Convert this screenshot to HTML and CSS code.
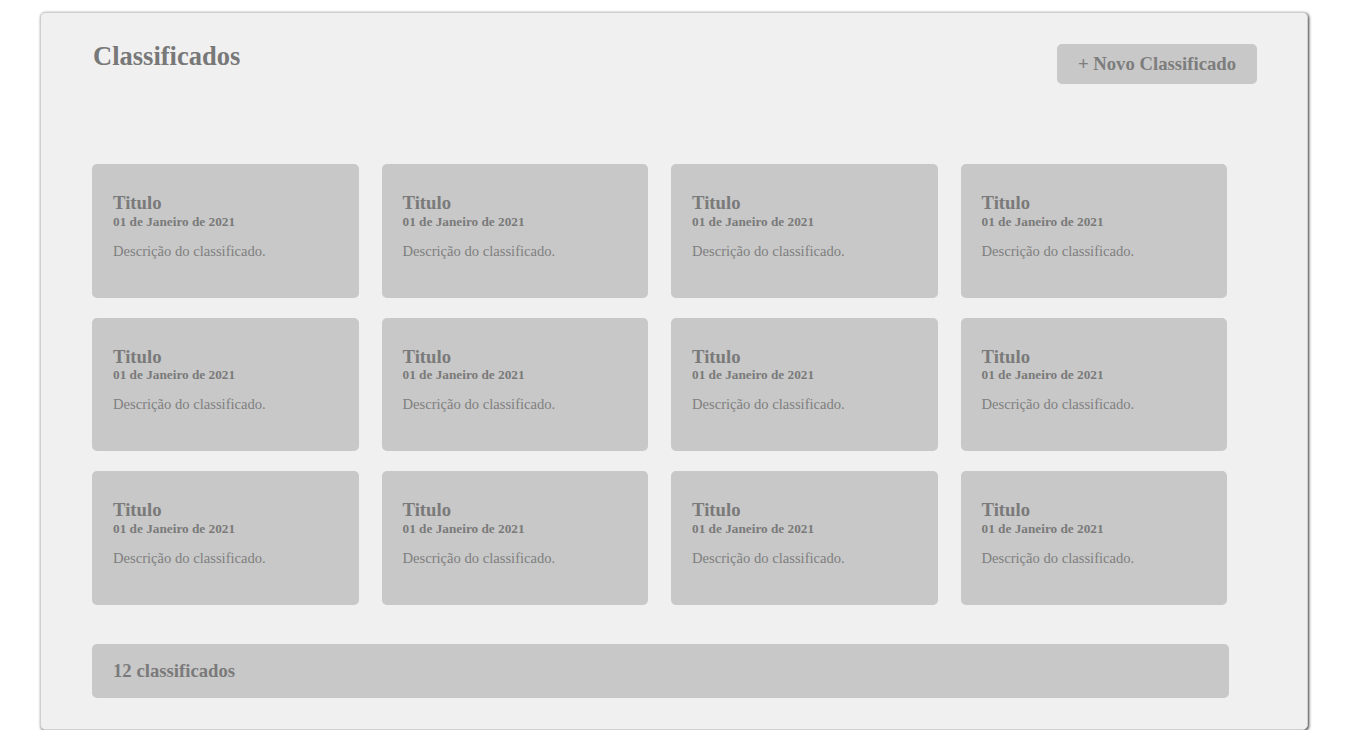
FILE: index.html
```html
<!DOCTYPE html>
<html lang="pt">
<head>
<meta charset="utf-8">
<title>Classificados</title>
<link rel="stylesheet" href="styles.css">
</head>
<body>
<main class="panel">
  <header class="panel-header">
    <h1 class="panel-title">Classificados</h1>
    <button class="btn-new" type="button">+ Novo Classificado</button>
  </header>
  <section class="grid">
    <article class="card"><h3 class="card-title">Titulo</h3><h5 class="card-date">01 de Janeiro de 2021</h5><p class="card-desc">Descrição do classificado.</p></article>
    <article class="card"><h3 class="card-title">Titulo</h3><h5 class="card-date">01 de Janeiro de 2021</h5><p class="card-desc">Descrição do classificado.</p></article>
    <article class="card"><h3 class="card-title">Titulo</h3><h5 class="card-date">01 de Janeiro de 2021</h5><p class="card-desc">Descrição do classificado.</p></article>
    <article class="card"><h3 class="card-title">Titulo</h3><h5 class="card-date">01 de Janeiro de 2021</h5><p class="card-desc">Descrição do classificado.</p></article>
    <article class="card"><h3 class="card-title">Titulo</h3><h5 class="card-date">01 de Janeiro de 2021</h5><p class="card-desc">Descrição do classificado.</p></article>
    <article class="card"><h3 class="card-title">Titulo</h3><h5 class="card-date">01 de Janeiro de 2021</h5><p class="card-desc">Descrição do classificado.</p></article>
    <article class="card"><h3 class="card-title">Titulo</h3><h5 class="card-date">01 de Janeiro de 2021</h5><p class="card-desc">Descrição do classificado.</p></article>
    <article class="card"><h3 class="card-title">Titulo</h3><h5 class="card-date">01 de Janeiro de 2021</h5><p class="card-desc">Descrição do classificado.</p></article>
    <article class="card"><h3 class="card-title">Titulo</h3><h5 class="card-date">01 de Janeiro de 2021</h5><p class="card-desc">Descrição do classificado.</p></article>
    <article class="card"><h3 class="card-title">Titulo</h3><h5 class="card-date">01 de Janeiro de 2021</h5><p class="card-desc">Descrição do classificado.</p></article>
    <article class="card"><h3 class="card-title">Titulo</h3><h5 class="card-date">01 de Janeiro de 2021</h5><p class="card-desc">Descrição do classificado.</p></article>
    <article class="card"><h3 class="card-title">Titulo</h3><h5 class="card-date">01 de Janeiro de 2021</h5><p class="card-desc">Descrição do classificado.</p></article>
  </section>
  <footer class="panel-footer">12 classificados</footer>
</main>
</body>
</html>
```

FILE: styles.css
```css
* { box-sizing: border-box; }

html, body {
  margin: 0;
  padding: 0;
  background: #ffffff;
  font-family: "Liberation Serif", "Times New Roman", serif;
  color: #7d7d7d;
}

.panel {
  width: 1268px;
  height: 718px;
  margin: 12px 0 0 40px;
  padding: 28px 50px 0 51px;
  background: #f0f0f0;
  border: 1px solid #cfcfcf;
  border-radius: 5px;
  box-shadow: 1px 1px 3px #3a3a3a;
}

.panel-header {
  display: flex;
  justify-content: space-between;
  align-items: flex-start;
  height: 43px;
}

.panel-title {
  margin: 0 0 0 1px;
  font-size: 26.5px;
  font-weight: bold;
  color: #787878;
  line-height: 30px;
}

.btn-new {
  margin-top: 3px;
  width: 200px;
  height: 40px;
  border: none;
  border-radius: 5px;
  background: #c8c8c8;
  font-family: "Liberation Serif", "Times New Roman", serif;
  font-size: 18.72px;
  font-weight: bold;
  color: #7d7d7d;
  padding: 0;
}

.grid {
  margin-top: 80px;
  width: 1135px;
  display: grid;
  grid-template-columns: repeat(4, 1fr);
  grid-auto-rows: 133.5px;
  column-gap: 23px;
  row-gap: 20px;
}

.card {
  background: #c8c8c8;
  border-radius: 5px;
  padding: 28px 21px 0 21px;
}

.card-title {
  margin: 0;
  font-size: 18.72px;
  font-weight: bold;
  line-height: 21.5px;
  color: #7a7a7a;
}

.card-date {
  margin: 0;
  font-size: 13.28px;
  font-weight: bold;
  line-height: 15.3px;
  color: #7a7a7a;
}

.card-desc {
  margin: 14px 0 0;
  font-size: 14.6px;
  line-height: 16.6px;
  color: #7f7f7f;
}

.panel-footer {
  margin-top: 39px;
  width: 1137px;
  height: 54px;
  background: #c8c8c8;
  border-radius: 5px;
  padding-left: 21px;
  display: flex;
  align-items: center;
  font-size: 18.72px;
  font-weight: bold;
  color: #7a7a7a;
}
```
